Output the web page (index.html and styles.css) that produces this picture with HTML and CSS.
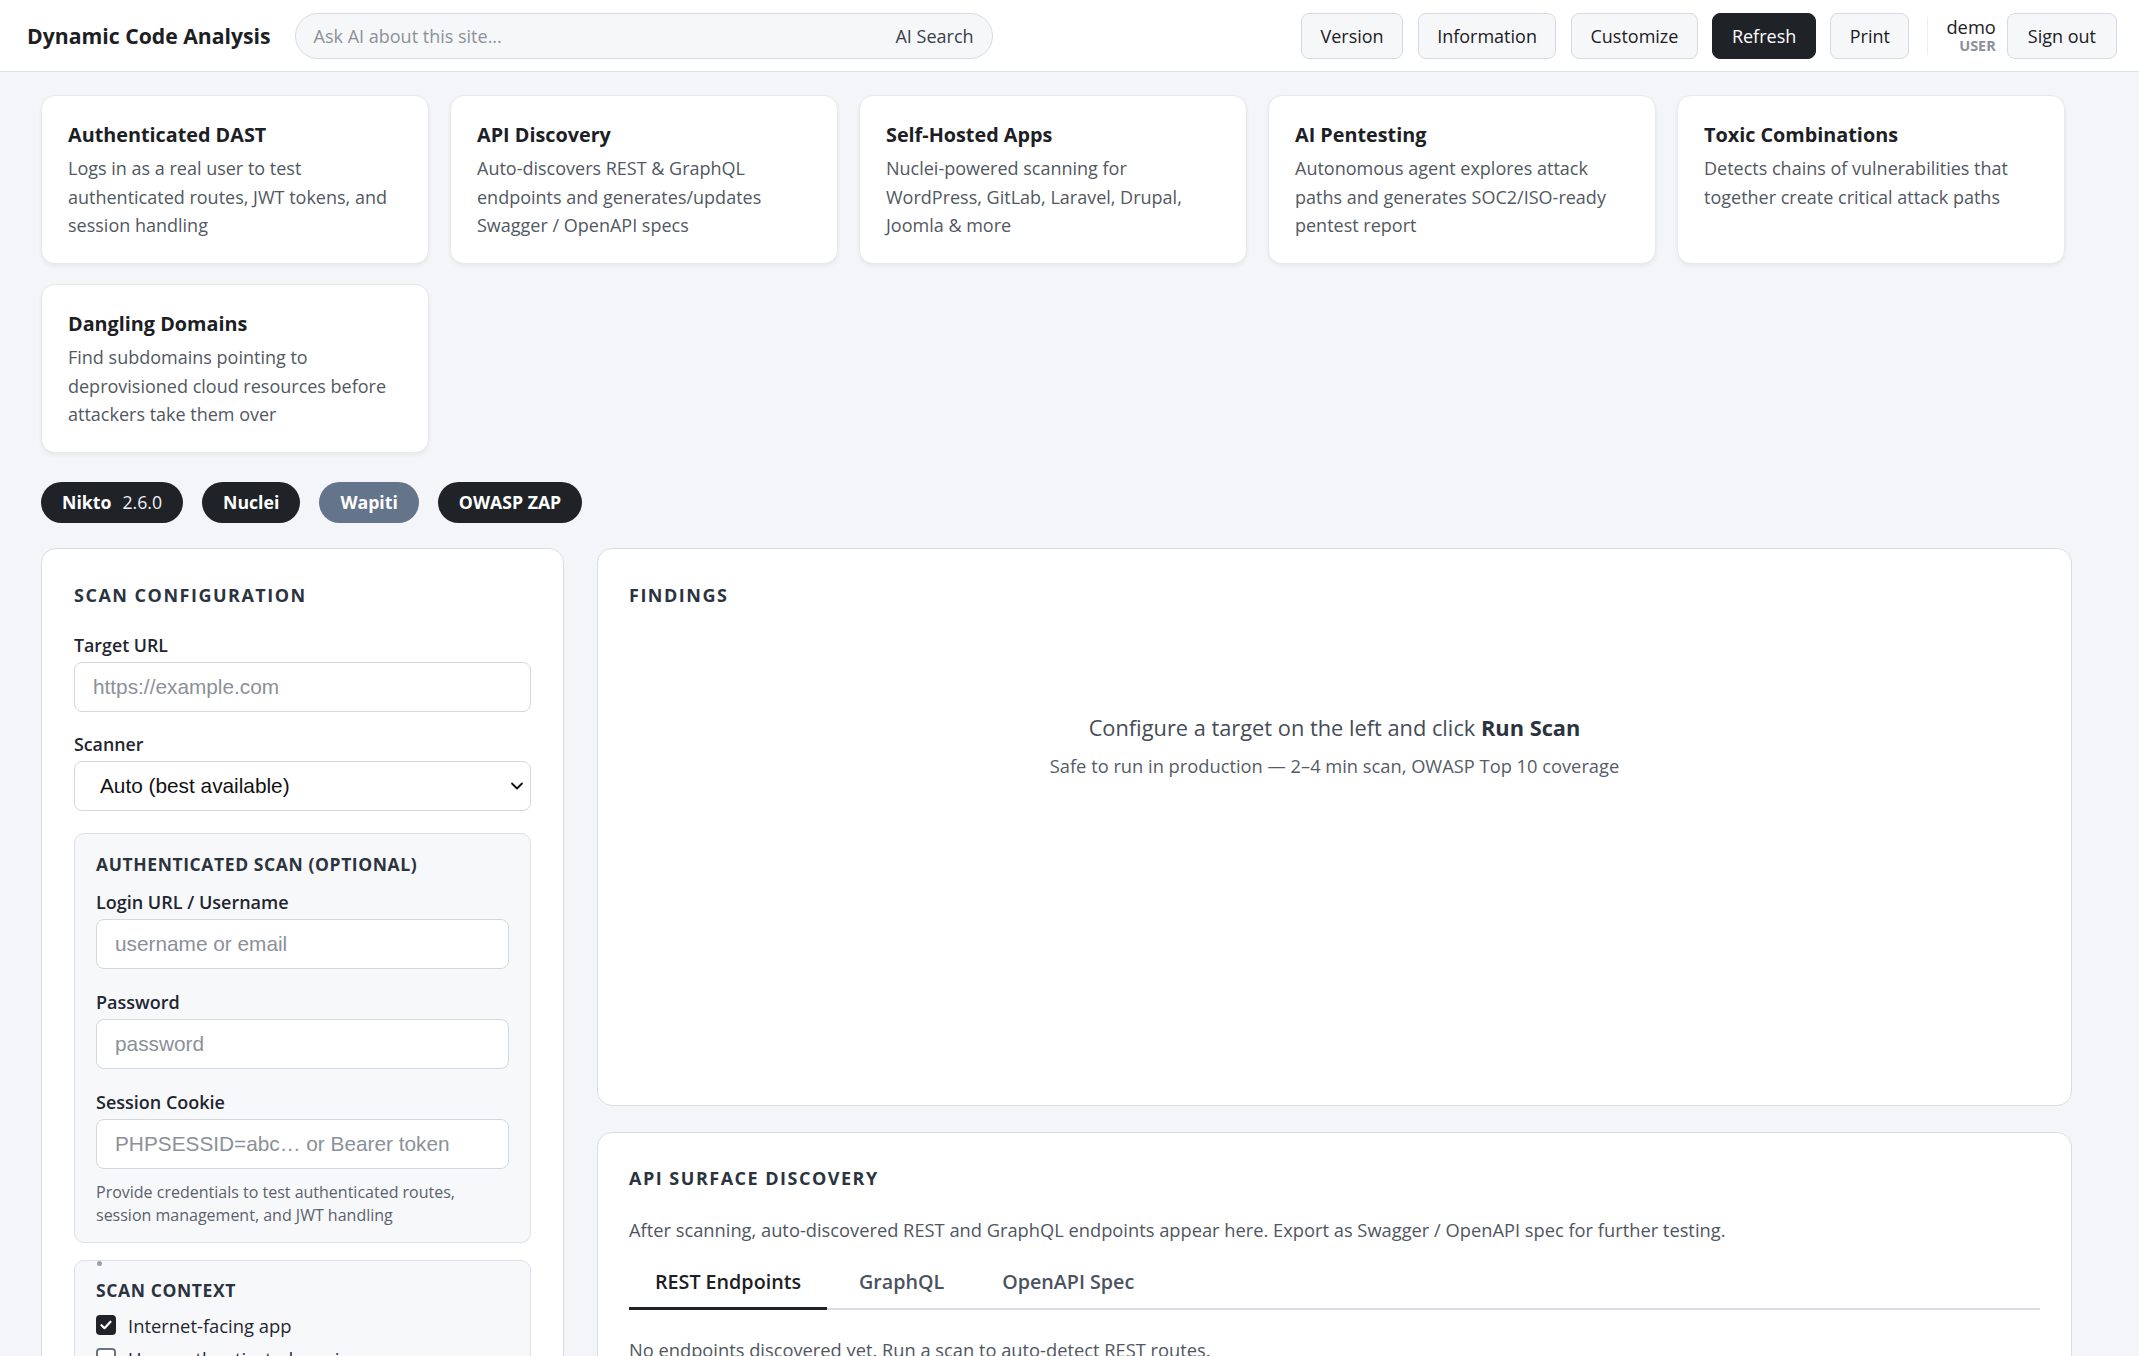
FILE: index.html
```html
<!DOCTYPE html>
<html lang="en">
<head>
  <meta charset="UTF-8" />
  <meta name="viewport" content="width=device-width, initial-scale=1.0"/>
  <title>Dynamic Code Analysis</title>
  <link rel="stylesheet" href="styles.css">
</head>
<body>

  <div class="topbar">
    <div class="brand">Dynamic Code Analysis</div>
    <div class="search">
      <span class="search-hint">Ask AI about this site...</span>
      <span class="search-btn">AI Search</span>
    </div>
    <div class="spacer"></div>
    <button class="nav-btn">Version</button>
    <button class="nav-btn">Information</button>
    <button class="nav-btn">Customize</button>
    <button class="nav-btn dark">Refresh</button>
    <button class="nav-btn">Print</button>
    <div class="divider"></div>
    <div class="user">
      <span class="user-name">demo</span>
      <span class="user-role">USER</span>
    </div>
    <button class="nav-btn signout">Sign out</button>
  </div>

  <div class="main">

    <div class="features">
      <div class="feature">
        <h3>Authenticated DAST</h3>
        <p>Logs in as a real user to test authenticated routes, JWT tokens, and session handling</p>
      </div>
      <div class="feature">
        <h3>API Discovery</h3>
        <p>Auto-discovers REST &amp; GraphQL endpoints and generates/updates Swagger / OpenAPI specs</p>
      </div>
      <div class="feature">
        <h3>Self-Hosted Apps</h3>
        <p>Nuclei-powered scanning for WordPress, GitLab, Laravel, Drupal, Joomla &amp; more</p>
      </div>
      <div class="feature">
        <h3>AI Pentesting</h3>
        <p>Autonomous agent explores attack paths and generates SOC2/ISO-ready pentest report</p>
      </div>
      <div class="feature">
        <h3>Toxic Combinations</h3>
        <p>Detects chains of vulnerabilities that together create critical attack paths</p>
      </div>
      <div class="feature">
        <h3>Dangling Domains</h3>
        <p>Find subdomains pointing to deprovisioned cloud resources before attackers take them over</p>
      </div>
    </div>

    <div class="tools">
      <span class="tool">Nikto<span class="tool-ver">2.6.0</span></span>
      <span class="tool">Nuclei</span>
      <span class="tool muted">Wapiti</span>
      <span class="tool">OWASP ZAP</span>
    </div>

    <div class="workspace">

      <div class="panel config">
        <h2 class="panel-title">Scan Configuration</h2>

        <label class="field-label">Target URL</label>
        <input class="field" type="text" placeholder="https://example.com" />

        <label class="field-label">Scanner</label>
        <div class="field select">
          <span>Auto (best available)</span>
          <svg width="16" height="16" viewBox="0 0 16 16"><path d="M3 5.5l5 5 5-5" fill="none" stroke="#111" stroke-width="1.8" stroke-linecap="round" stroke-linejoin="round"/></svg>
        </div>

        <div class="subbox">
          <h4 class="sub-title">Authenticated Scan (Optional)</h4>

          <label class="sub-label">Login URL / Username</label>
          <input class="field small" type="text" placeholder="username or email" />

          <label class="sub-label">Password</label>
          <input class="field small" type="text" placeholder="password" />

          <label class="sub-label">Session Cookie</label>
          <input class="field small" type="text" placeholder="PHPSESSID=abc… or Bearer token" />

          <p class="help">Provide credentials to test authenticated routes, session management, and JWT handling</p>
        </div>

        <div class="subbox context">
          <span class="dot"></span>
          <h4 class="sub-title">Scan Context</h4>
          <div class="check-row">
            <span class="check on"><svg width="14" height="14" viewBox="0 0 14 14"><path d="M2.5 7.2l3 3 6-6.5" fill="none" stroke="#fff" stroke-width="2.2" stroke-linecap="round" stroke-linejoin="round"/></svg></span>
            <span>Internet-facing app</span>
          </div>
          <div class="check-row">
            <span class="check"></span>
            <span>Uses authenticated sessions</span>
          </div>
          <div class="check-row">
            <span class="check"></span>
            <span>Handles payments or PII</span>
          </div>
        </div>
      </div>

      <div class="results">
        <div class="panel findings">
          <h2 class="panel-title">Findings</h2>
          <div class="empty">
            <p class="empty-main">Configure a target on the left and click <strong>Run Scan</strong></p>
            <p class="empty-sub">Safe to run in production — 2–4 min scan, OWASP Top 10 coverage</p>
          </div>
        </div>

        <div class="panel api">
          <h2 class="panel-title">API Surface Discovery</h2>
          <p class="api-desc">After scanning, auto-discovered REST and GraphQL endpoints appear here. Export as Swagger / OpenAPI spec for further testing.</p>
          <div class="tabs">
            <span class="tab active">REST Endpoints</span>
            <span class="tab">GraphQL</span>
            <span class="tab">OpenAPI Spec</span>
          </div>
          <p class="api-empty">No endpoints discovered yet. Run a scan to auto-detect REST routes.</p>
        </div>
      </div>

    </div>
  </div>

</body>
</html>
```

FILE: styles.css
```css
body {
  font-family: "Open Sans", "Noto Sans", sans-serif;
  background: #f4f5f8;
  color: #1c2024;
  margin: 0;
  padding: 0;
}

/* top bar */
.topbar {
  display: flex;
  align-items: center;
  height: 71px;
  padding: 0 22px 0 27px;
  background: #fff;
  border-bottom: 1px solid #dfe2e7;
}

.brand {
  font-size: 21.2px;
  font-weight: 700;
  color: #1c2024;
  margin-right: 24px;
}

.search {
  width: 698px;
  height: 46px;
  box-sizing: border-box;
  display: flex;
  align-items: center;
  justify-content: space-between;
  padding: 0 18px;
  background: #f6f7f9;
  border: 1px solid #d6dae0;
  border-radius: 23px;
  font-size: 18px;
}

.search-hint {
  color: #8c919a;
}

.search-btn {
  color: #3b4048;
}

.spacer {
  flex: 1;
}

.nav-btn {
  height: 46px;
  padding: 0 18.5px;
  margin-left: 14.5px;
  font-family: inherit;
  font-size: 18px;
  color: #1c2024;
  background: #f6f7f9;
  border: 1px solid #d6dae0;
  border-radius: 8px;
}

.nav-btn.dark {
  background: #1f2328;
  border-color: #1f2328;
  color: #fff;
}

.nav-btn.signout {
  padding: 0 20px;
}

.divider {
  width: 1px;
  height: 38px;
  background: #eceef1;
  margin: 0 18px;
}

.user {
  display: flex;
  flex-direction: column;
  align-items: flex-end;
  line-height: 19px;
}

.user .user-name {
  font-size: 18.3px;
  color: #1c2024;
}

.user .user-role {
  font-size: 14.5px;
  font-weight: 700;
  color: #8b909a;
}

.user + .nav-btn {
  margin-left: 11px;
}

/* content */
.main {
  padding: 23px 67px 0 41px;
}

.features {
  display: grid;
  grid-template-columns: repeat(5, 388px);
  gap: 20px 21px;
}

.feature {
  height: 169px;
  box-sizing: border-box;
  padding: 26px 26px;
  background: #fff;
  border: 1px solid #e7e9ed;
  border-radius: 14px;
  box-shadow: 0 2px 4px rgba(16, 24, 40, 0.06);
}

.feature h3 {
  margin: 0 0 6px;
  font-size: 19.8px;
  line-height: 26px;
  font-weight: 700;
  color: #1c2024;
}

.feature p {
  margin: 0;
  font-size: 18px;
  line-height: 28.7px;
  color: #515862;
}

.tools {
  display: flex;
  gap: 19px;
  margin: 29px 0 25px;
}

.tool {
  height: 41px;
  line-height: 41px;
  padding: 0 21px;
  border-radius: 21px;
  background: #1f2227;
  color: #fff;
  font-size: 17.7px;
  font-weight: 700;
}

.tool-ver {
  font-weight: 400;
  margin-left: 11px;
  color: #eef0f3;
}

.tool.muted {
  background: #64748b;
}

.workspace {
  display: grid;
  grid-template-columns: 523px 1fr;
  gap: 33px;
  align-items: start;
}

.panel {
  background: #fff;
  border: 1px solid #d9dde3;
  border-radius: 15px;
  box-sizing: border-box;
}

.panel-title {
  margin: 0;
  font-size: 18px;
  line-height: 24px;
  font-weight: 700;
  letter-spacing: 1.5px;
  text-transform: uppercase;
  color: #2b3340;
}

.config {
  padding: 34px 32px 40px;
}

.config .panel-title {
  margin-bottom: 26px;
}

.field-label {
  display: block;
  font-size: 17.8px;
  line-height: 24px;
  font-weight: 600;
  color: #1f2630;
  margin-bottom: 5px;
}

.field {
  display: block;
  width: 100%;
  height: 50px;
  box-sizing: border-box;
  margin: 0 0 20px;
  padding: 0 18px;
  font-family: "Liberation Sans", Arial, sans-serif;
  font-size: 20.8px;
  color: #111;
  background: #fff;
  border: 1px solid #d3d8de;
  border-radius: 8px;
}

.field::placeholder {
  color: #8b9099;
}

.select {
  display: flex;
  align-items: center;
  justify-content: space-between;
  padding: 0 5px 0 25px;
  margin-bottom: 22px;
}

.subbox {
  position: relative;
  padding: 18px 21px 15px;
  background: #f7f8fa;
  border: 1px solid #dde1e6;
  border-radius: 10px;
}

.sub-title {
  margin: 0 0 14px;
  font-size: 17.5px;
  line-height: 24px;
  font-weight: 700;
  letter-spacing: 0.6px;
  text-transform: uppercase;
  color: #2b3340;
}

.sub-label {
  display: block;
  font-size: 18px;
  line-height: 24px;
  font-weight: 600;
  color: #1f2630;
  margin-bottom: 5px;
}

.field.small {
  height: 50px;
  margin-bottom: 21px;
}

.help {
  margin: -9.5px 0 0;
  font-size: 16px;
  line-height: 23px;
  color: #5a616c;
}

.subbox.context {
  margin-top: 17px;
  padding-top: 17px;
}

.dot {
  position: absolute;
  left: 22px;
  top: 0;
  width: 5px;
  height: 5px;
  border-radius: 50%;
  background: #9aa0a8;
}

.context .sub-title {
  margin-bottom: 7px;
}

.check-row {
  display: flex;
  align-items: center;
  gap: 12px;
  height: 33px;
  font-size: 18.4px;
  color: #1f2630;
}

.check {
  width: 20px;
  height: 20px;
  box-sizing: border-box;
  border: 2px solid #6b7280;
  border-radius: 4px;
  background: #fff;
  display: flex;
  align-items: center;
  justify-content: center;
}

.check.on {
  background: #1f2328;
  border-color: #1f2328;
}

.results {
  display: flex;
  flex-direction: column;
  gap: 26px;
}

.findings {
  height: 558px;
  padding: 34px 31px;
}

.empty {
  text-align: center;
  margin-top: 106px;
}

.empty-main {
  margin: 0 0 11px;
  font-size: 21.8px;
  line-height: 30px;
  color: #454c57;
}

.empty-main strong {
  color: #2b3340;
}

.empty-sub {
  margin: 0;
  font-size: 18.3px;
  line-height: 24px;
  color: #555c67;
}

.api {
  padding: 33px 31px 30px;
}

.api-desc {
  margin: 27.6px 0 28px;
  font-size: 18.3px;
  line-height: 24px;
  color: #4f5661;
}

.tabs {
  display: flex;
  gap: 6px;
  border-bottom: 2px solid #d9dce1;
}

.tab {
  padding: 0 26px 13.7px;
  margin-bottom: -2px;
  border-bottom: 3px solid transparent;
  font-size: 19.7px;
  line-height: 24px;
  font-weight: 600;
  color: #4b5260;
}

.tab.active {
  color: #1c2024;
  border-bottom-color: #1f2328;
}

.api-empty {
  margin: 27.7px 0 0;
  font-size: 18.3px;
  line-height: 24px;
  color: #4f5661;
}
```
